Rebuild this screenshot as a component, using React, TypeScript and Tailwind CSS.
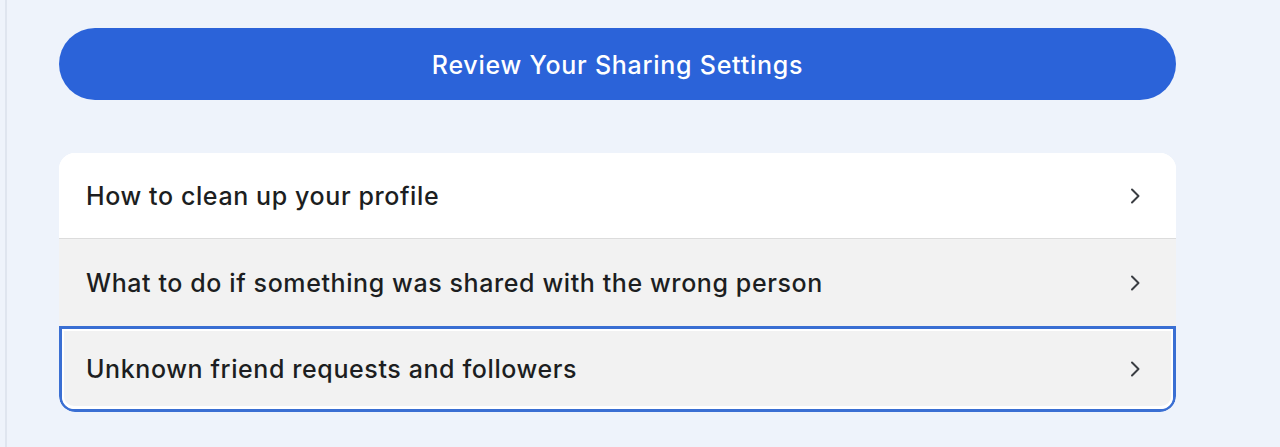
import React from 'react';

const rows = [
  'How to clean up your profile',
  'What to do if something was shared with the wrong person',
  'Unknown friend requests and followers',
];

function Chevron() {
  return (
    <svg width="14" height="20" viewBox="0 0 14 20" fill="none" className="shrink-0">
      <path d="M3 3.5l6.5 6.5-6.5 6.5" stroke="#3a3d42" strokeWidth="2" strokeLinecap="round" strokeLinejoin="round" />
    </svg>
  );
}

function App() {
  return (
    <div
      className="h-[447px] w-[1280px] bg-[#eef3fb] flex overflow-hidden"
      style={{ fontFamily: 'Inter, "Noto Sans", sans-serif' }}
    >
      <div className="w-[7px] shrink-0 border-r-2 border-[#dfe5ef]" />
      <div className="ml-[52px] w-[1117px] pt-[28px]">
        <button className="w-full h-[72px] rounded-full bg-[#2b63d9] text-white text-[25px] font-[450] tracking-[0.75px] pt-[3px]">
          Review Your Sharing Settings
        </button>

        <div className="mt-[53px] rounded-[16px] overflow-hidden bg-white">
          <div className="h-[86px] bg-white border-b border-[#dcdcdc] flex items-center justify-between pl-[27px] pr-[33px]">
            <span className="text-[25px] font-[450] tracking-[0.6px] text-[#1c1e21] pt-[2px]">{rows[0]}</span>
            <Chevron />
          </div>
          <div className="h-[87px] bg-[#f2f2f2] flex items-center justify-between pl-[27px] pr-[33px]">
            <span className="text-[25px] font-[450] tracking-[0.6px] text-[#1c1e21] pt-[2px]">{rows[1]}</span>
            <Chevron />
          </div>
          <div className="h-[86px] border-[3px] border-[#3a6fd3] rounded-b-[16px] bg-white">
            <div className="h-full border-t-2 border-x-2 border-b-[3px] border-white bg-[#f2f2f2] flex items-center justify-between pl-[22px] pr-[28px] rounded-b-[12px]">
              <span className="text-[25px] font-[450] tracking-[0.6px] text-[#1c1e21] pt-[2px]">{rows[2]}</span>
              <Chevron />
            </div>
          </div>
        </div>
      </div>
    </div>
  );
}

export default App;
